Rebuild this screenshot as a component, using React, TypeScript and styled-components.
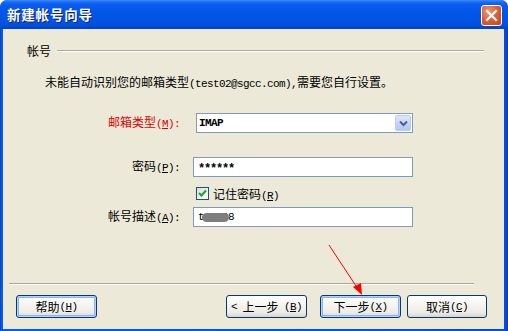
import React from 'react';
import styled, { createGlobalStyle } from 'styled-components';

const Global = createGlobalStyle`
  html, body { margin: 0; padding: 0; background: #ffffff; }
  body {
    font-family: "Noto Sans CJK SC", "Liberation Sans", sans-serif;
    font-size: 12px;
    color: #000;
  }
`;

const Window = styled.div`
  position: relative;
  width: 508px;
  height: 331px;
  box-sizing: border-box;
  display: flex;
  flex-direction: column;
  background: linear-gradient(to right, #0841C4 0px, #0A5BEA 2px, #0055E5 50%, #0A4AD8 calc(100% - 2px), #0831B0 100%);
  border-radius: 7px 7px 0 0;
  padding: 0 4px 2px 3px;
  overflow: hidden;
`;

const TitleBar = styled.div`
  height: 29px;
  margin: 0 -4px 0 -3px;
  padding: 0 6px 0 7px;
  display: flex;
  align-items: center;
  justify-content: space-between;
  border-radius: 7px 7px 0 0;
  background: linear-gradient(to bottom, #3D8FFA 0px, #1A6AF5 2px, #0A5BEE 5px, #0055E5 14px, #0054E3 22px, #004ED8 26px, #0044C6 29px);
`;

const Title = styled.span`
  color: #ffffff;
  font-weight: bold;
  font-size: 13.5px;
  letter-spacing: 0.8px;
  text-shadow: 1px 1px 0 #0A1E8A;
  margin-top: -1px;
`;

const CloseBtn = styled.div`
  width: 21px;
  height: 21px;
  box-sizing: border-box;
  border: 1px solid #ffffff;
  border-radius: 3px;
  background: radial-gradient(circle at 35% 30%, #F09A78 0%, #E0603A 45%, #C8401C 100%);
  display: flex;
  align-items: center;
  justify-content: center;
  margin-top: 1px;
`;

const Client = styled.div`
  flex: 1;
  background: #ECE9D8;
  display: flex;
  flex-direction: column;
`;

const SectionHeader = styled.div`
  display: flex;
  align-items: center;
  gap: 6px;
  margin: 15px 20px 0 24px;
  height: 14px;
  line-height: 14px;
`;

const Rule = styled.div`
  flex: 1;
  height: 0;
  border-top: 1px solid #ACA899;
  border-bottom: 1px solid #FFFFFF;
`;

const Description = styled.div`
  margin: 17px 0 0 42px;
  height: 14px;
  line-height: 14px;
  white-space: nowrap;
`;

const Latin = styled.span`
  font-family: "Liberation Mono", monospace;
  font-size: 11px;
  letter-spacing: -0.6px;
`;

const Stars = styled.span`
  display: inline-block;
  font-family: "Liberation Mono", monospace;
  font-size: 12px;
  font-weight: bold;
  letter-spacing: -1.2px;
  padding-top: 3px;
`;

const Form = styled.div`
  display: flex;
  flex-direction: column;
  margin-top: 24px;
`;

const Row = styled.div<{ $top: number; $h: number }>`
  display: flex;
  align-items: center;
  margin-top: ${p => p.$top}px;
  height: ${p => p.$h}px;
`;

const Label = styled.span<{ $red?: boolean }>`
  width: 177px;
  text-align: right;
  color: ${p => (p.$red ? '#E00000' : '#000')};
  white-space: nowrap;
  line-height: 14px;
`;

const Select = styled.div`
  margin-left: 16px;
  width: 217px;
  height: 20px;
  box-sizing: border-box;
  border: 1px solid #7F9DB9;
  background: #ffffff;
  display: flex;
  align-items: center;
  justify-content: space-between;
  padding: 1px 1px 1px 2px;
`;

const SelectText = styled(Latin)`
  font-weight: bold;
`;

const DropButton = styled.div`
  width: 16px;
  height: 16px;
  box-sizing: border-box;
  border: 1px solid #B9CDF5;
  border-radius: 2px;
  background: linear-gradient(to bottom, #DCE6FC, #C1D3FB 60%, #B2C7F5);
  display: flex;
  align-items: center;
  justify-content: center;
`;

const Input = styled.div<{ $h?: number }>`
  position: relative;
  margin-left: 13px;
  width: 220px;
  height: ${p => p.$h ?? 20}px;
  box-sizing: border-box;
  border: 1px solid #7F9DB9;
  background: #ffffff;
  display: flex;
  align-items: center;
  padding-left: 4px;
`;

const Smudge = styled.span`
  position: absolute;
  left: 8px;
  top: 5px;
  width: 27px;
  height: 9px;
  border-radius: 5px;
  background: #7E7E7E;
  filter: blur(0.7px);
`;

const CheckRow = styled.div`
  display: flex;
  align-items: center;
  gap: 4px;
  margin-left: 16px;
`;

const CheckBox = styled.div`
  width: 13px;
  height: 13px;
  box-sizing: border-box;
  border: 1px solid #1C5180;
  background: linear-gradient(135deg, #DCDCD7, #FFFFFF);
  display: flex;
  align-items: center;
  justify-content: center;
`;

const Footer = styled.div`
  margin-top: auto;
  display: flex;
  flex-direction: column;
`;

const BottomRule = styled(Rule)`
  flex: none;
  margin: 0 30px 0 6px;
`;

const ButtonRow = styled.div`
  display: flex;
  align-items: center;
  margin: 10px 17px 11px 13px;
`;

const NavGroup = styled.div`
  display: flex;
  margin-left: auto;
`;

const Button = styled.div<{ $focus?: boolean; $w?: number; $gap?: number }>`
  width: ${p => p.$w ?? 81}px;
  height: 23px;
  margin-left: ${p => p.$gap ?? 0}px;
  box-sizing: border-box;
  border: 1px solid #003C74;
  border-radius: 3px;
  background: linear-gradient(to bottom, #FFFFFF 0%, #F6F5F1 40%, #ECEBE6 80%, #D8D4CA 100%);
  box-shadow: ${p => (p.$focus ? 'inset 0 0 0 1px #B8D2F7, inset 0 0 0 2px #8CB4F2' : 'none')};
  display: flex;
  align-items: center;
  justify-content: center;
  white-space: nowrap;
  line-height: 14px;
`;

const BackText = styled.span`
  display: flex;
  width: 100%;
  padding: 0 4px;
  box-sizing: border-box;
  justify-content: space-between;
`;

const Arrow = styled.svg`
  position: absolute;
  left: 0;
  top: 0;
  pointer-events: none;
`;

const Key = ({ k }: { k: string }) => (
  <Latin>
    (<u>{k}</u>)
  </Latin>
);

export default function App() {
  return (
    <>
      <Global />
      <Window>
        <TitleBar>
          <Title>新建帐号向导</Title>
          <CloseBtn>
            <svg width="13" height="13" viewBox="0 0 13 13">
              <path d="M2 2 L11 11 M11 2 L2 11" stroke="#ffffff" strokeWidth="2.2" strokeLinecap="square" />
            </svg>
          </CloseBtn>
        </TitleBar>
        <Client>
          <SectionHeader>
            <span>帐号</span>
            <Rule />
          </SectionHeader>
          <Description>
            未能自动识别您的邮箱类型<Latin>(test02@sgcc.com),</Latin>需要您自行设置。
          </Description>
          <Form>
            <Row $top={0} $h={20}>
              <Label $red>
                邮箱类型<Key k="M" />
                <Latin>:</Latin>
              </Label>
              <Select>
                <SelectText>IMAP</SelectText>
                <DropButton>
                  <svg width="9" height="7" viewBox="0 0 9 7">
                    <path d="M1 1.5 L4.5 5 L8 1.5" fill="none" stroke="#4D6185" strokeWidth="2" />
                  </svg>
                </DropButton>
              </Select>
            </Row>
            <Row $top={24} $h={20}>
              <Label>
                密码<Key k="P" />
                <Latin>:</Latin>
              </Label>
              <Input>
                <Stars>******</Stars>
              </Input>
            </Row>
            <Row $top={10} $h={13}>
              <Label />
              <CheckRow>
                <CheckBox>
                  <svg width="9" height="9" viewBox="0 0 9 9">
                    <path d="M1 4 L3.5 6.5 L8 1.5" fill="none" stroke="#21A121" strokeWidth="2" />
                  </svg>
                </CheckBox>
                <span>
                  记住密码<Key k="R" />
                </span>
              </CheckRow>
            </Row>
            <Row $top={7} $h={20}>
              <Label>
                帐号描述<Key k="A" />
                <Latin>:</Latin>
              </Label>
              <Input>
                <Latin>test08</Latin>
                <Smudge />
              </Input>
            </Row>
          </Form>
          <Footer>
            <BottomRule />
            <ButtonRow>
              <Button $focus>
                帮助<Key k="H" />
              </Button>
              <NavGroup>
                <Button>
                  <BackText>
                    <Latin>&lt;</Latin>
                    <span>上一步</span>
                    <Key k="B" />
                  </BackText>
                </Button>
                <Button $focus $gap={13}>
                  下一步<Key k="X" />
                </Button>
                <Button $gap={6} $w={80}>
                  取消<Key k="C" />
                </Button>
              </NavGroup>
            </ButtonRow>
          </Footer>
        </Client>
        <Arrow width="508" height="331" viewBox="0 0 508 331">
          <line x1="329" y1="245" x2="358" y2="289" stroke="#FF0000" strokeWidth="1" />
          <path d="M362 295 L353 287 L361 283 Z" fill="#FF0000" />
        </Arrow>
      </Window>
    </>
  );
}
